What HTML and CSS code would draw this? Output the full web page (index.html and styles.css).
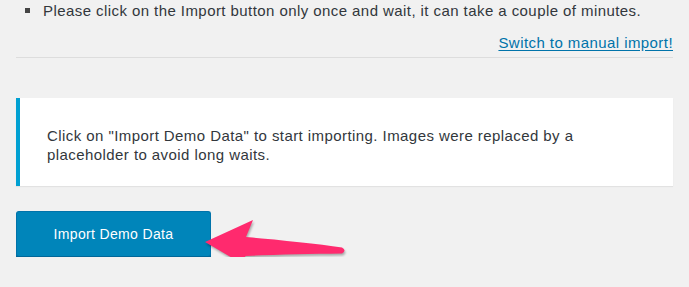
FILE: index.html
```html
<!DOCTYPE html>
<html lang="en">
<head>
<meta charset="UTF-8">
<meta name="viewport" content="initial-scale=1, width=device-width">
<title>Import Demo Data</title>
<link rel="stylesheet" href="styles.css">
</head>
<body>
<div class="wrap">
	<ul class="notes">
		<li>Please click on the Import button only once and wait, it can take a couple of minutes.</li>
	</ul>
	<p class="switch"><a href="#">Switch to manual import!</a></p>
	<hr class="sep">

	<div class="notice">
		<p>Click on "Import Demo Data" to start importing. Images were replaced by a placeholder to avoid long waits.</p>
	</div>

	<div class="actions">
		<button class="btn-primary">Import Demo Data</button>
		<svg class="arrow" width="150" height="60" viewBox="0 0 150 60">
			<path d="M5,28 L53,6 L46,23 C80,26 118,30 142,33.5 Q147,36.5 142,39.5 C110,40 80,40.5 45,42 L51,55 Z" fill="#ff2a6e"/>
		</svg>
	</div>
</div>
</body>
</html>
```

FILE: styles.css
```css
html, body {margin:0; padding:0; background:#f1f1f1; color:#32373c;}
body {font-family:"Liberation Sans", Arial, sans-serif; font-size:15px; line-height:20px; letter-spacing:0.43px;}

.wrap {padding:1px 16px 0;}

ul.notes {list-style:none; margin:0; padding:0 0 0 9px;}
ul.notes li::before {content:""; display:inline-block; width:5px; height:5px; background:#444; margin-right:13px; vertical-align:3px;}

p.switch {margin:12px 0 0; text-align:right;}
p.switch a {color:#0073aa; text-decoration:underline; text-underline-offset:2px;}

hr.sep {margin:4px 0 0; border:0; border-top:1px solid #ddd; height:0;}

.notice {margin-top:40px; background:#fff; border-left:4px solid #00a0d2; box-shadow:0 1px 1px rgba(0,0,0,0.06); padding:28px 60px 22px 27px;}
.notice p {margin:0; line-height:19px;}

.actions {position:relative; margin-top:25px;}
.btn-primary {display:block; width:195px; height:46px; padding:0; background:#0085ba; color:#fff; border:1px solid #0073aa; border-bottom-color:#006799; border-radius:3px; box-shadow:0 2px 0 #006799; font-family:"Liberation Sans", Arial, sans-serif; font-size:14px; letter-spacing:0.35px; cursor:pointer;}
.arrow {position:absolute; left:184px; top:3px; filter:drop-shadow(1px 2px 1px rgba(0,0,0,0.3));}
```
